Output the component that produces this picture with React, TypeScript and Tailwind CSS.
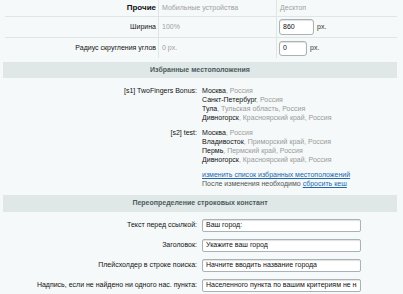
import React from "react";

const Loc = ({ city, rest }: { city: string; rest: string }) => (
  <div className="h-[9px] leading-[9px] whitespace-nowrap">
    <span className="text-[#111]">{city}</span>
    <span className="text-[#9a9a9a]">, {rest}</span>
  </div>
);

const Group = ({ label, items }: { label: string; items: [string, string][] }) => (
  <div className="flex">
    <div className="w-[198px] shrink-0 pr-[1px] text-right leading-[9px] text-[#111]">{label}</div>
    <div className="pl-[4px]">
      {items.map(([c, r], i) => (
        <Loc key={i} city={c} rest={r} />
      ))}
    </div>
  </div>
);

const Field = ({ label, value }: { label: string; value: string }) => (
  <div className="flex h-[20px] items-center">
    <div className="w-[198px] shrink-0 pr-[1px] text-right text-[#111]">{label}</div>
    <div className="ml-[4px] flex h-[13px] w-[159px] items-center overflow-hidden whitespace-nowrap rounded-[2px] border border-[#a9b3b5] bg-white px-[3px] text-[#111] shadow-[inset_0_1px_1px_rgba(0,0,0,0.12)]">
      <span className="block overflow-hidden">{value}</span>
    </div>
  </div>
);

export default function App() {
  return (
    <div
      className="h-[294px] w-[403px] overflow-hidden bg-[#f5f9f9] text-[7px] text-[#111]"
      style={{ fontFamily: '"Liberation Sans", Arial, sans-serif' }}
    >
      {/* top table */}
      <div className="px-[5px] pr-[6px]">
        <div className="flex h-[17px] items-center border-b border-[#e0e6e6]">
          <div className="w-[154px] border-r border-[#e0e6e6] pr-[2px] text-right text-[8px] font-bold h-full flex items-center justify-end">Прочие</div>
          <div className="w-[118px] border-r border-[#e0e6e6] pl-[3px] text-[#a0a0a0] h-full flex items-center">Мобильные устройства</div>
          <div className="pl-[3px] text-[#a0a0a0]">Десктоп</div>
        </div>
        <div className="flex h-[21px] items-center border-b border-[#e0e6e6]">
          <div className="w-[154px] border-r border-[#e0e6e6] pr-[2px] text-right h-full flex items-center justify-end">Ширина</div>
          <div className="w-[118px] border-r border-[#e0e6e6] pl-[3px] text-[#a0a0a0] h-full flex items-center">100%</div>
          <div className="flex items-center pl-[2px]">
            <div className="flex h-[16px] w-[35px] items-center rounded-[3px] border border-[#a9b3b5] bg-white px-[3px] shadow-[inset_0_1px_1px_rgba(0,0,0,0.12)]">860</div>
            <span className="ml-[3px] text-[#333]">px.</span>
          </div>
        </div>
        <div className="flex h-[20px] items-center">
          <div className="w-[154px] border-r border-[#e0e6e6] pr-[2px] text-right h-full flex items-center justify-end">Радиус скругления углов</div>
          <div className="w-[118px] border-r border-[#e0e6e6] pl-[3px] text-[#a0a0a0] h-full flex items-center">0 px.</div>
          <div className="flex items-center pl-[2px]">
            <div className="flex h-[15px] w-[28px] items-center rounded-[3px] border border-[#a9b3b5] bg-white px-[3px] shadow-[inset_0_1px_1px_rgba(0,0,0,0.12)]">0</div>
            <span className="ml-[3px] text-[#333]">px.</span>
          </div>
        </div>
      </div>

      {/* band 1 */}
      <div className="mx-[3px] mt-[4px] flex h-[16px] w-[394px] items-center justify-center bg-[#e0e8e7] text-[7px] font-bold text-[#4b5a5e]">
        Избранные местоположения
      </div>

      <div className="mt-[8px] flex flex-col gap-[6px]">
        <Group
          label="[s1] TwoFingers Bonus:"
          items={[
            ["Москва", "Россия"],
            ["Санкт-Петербург", "Россия"],
            ["Тула", "Тульская область, Россия"],
            ["Дивногорск", "Красноярский край, Россия"],
          ]}
        />
        <Group
          label="[s2] test:"
          items={[
            ["Москва", "Россия"],
            ["Владивосток", "Приморский край, Россия"],
            ["Пермь", "Пермский край, Россия"],
            ["Дивногорск", "Красноярский край, Россия"],
          ]}
        />
      </div>

      <div className="ml-[202px] mt-[6px] leading-[9px]">
        <div className="text-[#2067b0] underline">изменить список избранных местоположений</div>
        <div className="text-[#555]">
          После изменения необходимо <span className="text-[#2067b0] underline">сбросить кеш</span>
        </div>
      </div>

      {/* band 2 */}
      <div className="mx-[3px] mt-[7px] flex h-[17px] w-[394px] items-center justify-center bg-[#e0e8e7] font-bold text-[#4b5a5e]">
        Переопределение строковых констант
      </div>

      <div className="mt-[3px]">
        <Field label="Текст перед ссылкой:" value="Ваш город:" />
        <Field label="Заголовок:" value="Укажите ваш город" />
        <Field label="Плейсхолдер в строке поиска:" value="Начните вводить название города" />
        <Field label="Надпись, если не найдено ни одного нас. пункта:" value="Населенного пункта по вашим критериям не найдено" />
      </div>
    </div>
  );
}
